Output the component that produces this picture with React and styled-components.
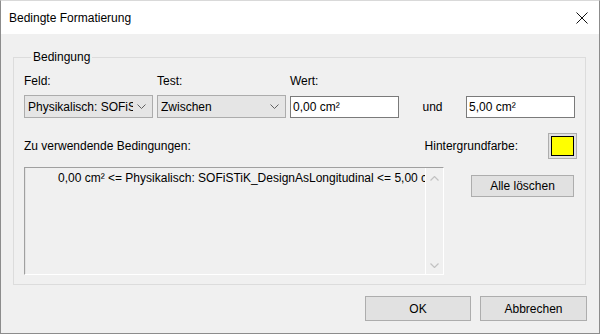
import React from "react";
import styled, { createGlobalStyle } from "styled-components";

const Global = createGlobalStyle`
    html, body {
        margin: 0;
        padding: 0;
        background: #ffffff;
    }
    body {
        font-family: "Liberation Sans", Arial, sans-serif;
        font-size: 12px;
        color: #000000;
    }
`;

const Window = styled.div`
    width: 600px;
    height: 334px;
    box-sizing: border-box;
    border: 1px solid #8c8c8c;
    border-top-color: #d9d9d9;
    background: #f0f0f0;
    display: flex;
    flex-direction: column;
    overflow: hidden;
`;

const TitleBar = styled.div`
    height: 33px;
    flex: none;
    background: #ffffff;
    display: flex;
    align-items: center;
    justify-content: space-between;
    padding: 0 10px 0 8px;
    font-size: 12px;
`;

const Close = styled.svg`
    width: 12px;
    height: 12px;
    margin-right: 1px;
`;

const Body = styled.div`
    flex: 1;
    display: flex;
    flex-direction: column;
    padding: 16px 13px 0 12px;
`;

const Group = styled.fieldset`
    margin: 0;
    padding: 6px 9px 8px 10px;
    border: 1px solid #dcdcdc;
    display: flex;
    flex-direction: column;
    height: 235px;
    box-sizing: border-box;

    legend {
        padding: 0 2px;
        margin-left: 7px;
        line-height: 14px;
    }
`;

const FieldGrid = styled.div`
    display: grid;
    grid-template-columns: 129px 129px 109px 59px 109px;
    column-gap: 4px;
    row-gap: 7px;
    margin-top: 4px;
    align-items: center;
`;

const Label = styled.span`
    line-height: 14px;
    text-align: ${({ $center }) => ($center ? "center" : "left")};
`;

const Select = styled.div`
    height: 23px;
    box-sizing: border-box;
    background: #e5e5e5;
    border: 1px solid #acacac;
    display: flex;
    align-items: center;
    padding: 0 6px 0 3px;
    gap: 4px;

    span {
        flex: 1;
        overflow: hidden;
        white-space: nowrap;
    }
`;

const Chevron = styled.svg`
    width: 9px;
    height: 5px;
    flex: none;
`;

const Input = styled.div`
    height: 22px;
    box-sizing: border-box;
    background: #ffffff;
    border: 1px solid #7a7a7a;
    display: flex;
    align-items: center;
    padding: 0 2px;
`;

const ColourRow = styled.div`
    display: flex;
    align-items: center;
    margin-top: 15px;
    height: 26px;

    & > span:first-child {
        flex: 1;
    }
`;

const Swatch = styled.div`
    width: 29px;
    height: 26px;
    box-sizing: border-box;
    margin-left: 30px;
    margin-right: -1px;
    border: 1px solid #adadad;
    background: #e1e1e1;
    padding: 2px;

    div {
        width: 100%;
        height: 100%;
        box-sizing: border-box;
        border: 1px solid #000000;
        background: ${({ $colour }) => $colour};
    }
`;

const ListRow = styled.div`
    display: flex;
    margin-top: 8px;
    gap: 27px;
`;

const ListBox = styled.div`
    width: 420px;
    height: 108px;
    box-sizing: border-box;
    border: 1px solid #a0a0a0;
    border-right-color: #ffffff;
    border-bottom-color: #ffffff;
    box-shadow: inset 1px 0 0 #e3e3e3;
    display: flex;
`;

const ListItems = styled.div`
    flex: 1;
    overflow: hidden;
    padding: 3px 0 0 33px;
    white-space: nowrap;
    line-height: 14px;
`;

const ScrollBar = styled.div`
    width: 17px;
    flex: none;
    border-left: 1px solid #ffffff;
    display: flex;
    flex-direction: column;
    justify-content: space-between;
    align-items: center;
    padding: 8px 0 6px;
`;

const Button = styled.button`
    width: ${({ $w }) => $w}px;
    height: ${({ $h }) => $h || 23}px;
    margin-top: ${({ $top }) => $top || 0}px;
    box-sizing: border-box;
    background: #e1e1e1;
    border: 1px solid #adadad;
    font-family: inherit;
    font-size: 12px;
    color: #000000;
    padding: 0;
`;

const Footer = styled.div`
    display: flex;
    justify-content: flex-end;
    gap: 9px;
    margin-top: 11px;
    margin-right: -1px;
`;

const Down = () => (
    <Chevron viewBox="0 0 9 5">
        <path d="M0.5 0.5 L4.5 4.5 L8.5 0.5" fill="none" stroke="#606060" strokeWidth="1" />
    </Chevron>
);

const Arrow = ({ up }) => (
    <svg width="9" height="5" viewBox="0 0 9 5">
        <path
            d={up ? "M0.5 4.5 L4.5 0.5 L8.5 4.5" : "M0.5 0.5 L4.5 4.5 L8.5 0.5"}
            fill="none"
            stroke="#c2c2c2"
            strokeWidth="1.2"
        />
    </svg>
);

export default function App() {
    return (
        <>
            <Global />
            <Window>
                <TitleBar>
                    <span>Bedingte Formatierung</span>
                    <Close viewBox="0 0 12 12">
                        <path d="M0.5 0.5 L11.5 11.5 M11.5 0.5 L0.5 11.5" stroke="#111" strokeWidth="1" />
                    </Close>
                </TitleBar>
                <Body>
                    <Group>
                        <legend>Bedingung</legend>
                        <FieldGrid>
                            <Label>Feld:</Label>
                            <Label>Test:</Label>
                            <Label>Wert:</Label>
                            <span />
                            <span />
                            <Select>
                                <span>Physikalisch: SOFiSTiK_DesignAsLongitudinal</span>
                                <Down />
                            </Select>
                            <Select>
                                <span>Zwischen</span>
                                <Down />
                            </Select>
                            <Input>0,00 cm²</Input>
                            <Label $center>und</Label>
                            <Input>5,00 cm²</Input>
                        </FieldGrid>
                        <ColourRow>
                            <Label>Zu verwendende Bedingungen:</Label>
                            <Label>Hintergrundfarbe:</Label>
                            <Swatch $colour="#ffff00">
                                <div />
                            </Swatch>
                        </ColourRow>
                        <ListRow>
                            <ListBox>
                                <ListItems>
                                    0,00 cm² &lt;= Physikalisch: SOFiSTiK_DesignAsLongitudinal &lt;= 5,00 cm²
                                </ListItems>
                                <ScrollBar>
                                    <Arrow up />
                                    <Arrow />
                                </ScrollBar>
                            </ListBox>
                            <Button $w={103} $h={22} $top={8}>Alle löschen</Button>
                        </ListRow>
                    </Group>
                    <Footer>
                        <Button $w={106} $h={25}>OK</Button>
                        <Button $w={107} $h={25}>Abbrechen</Button>
                    </Footer>
                </Body>
            </Window>
        </>
    );
}
